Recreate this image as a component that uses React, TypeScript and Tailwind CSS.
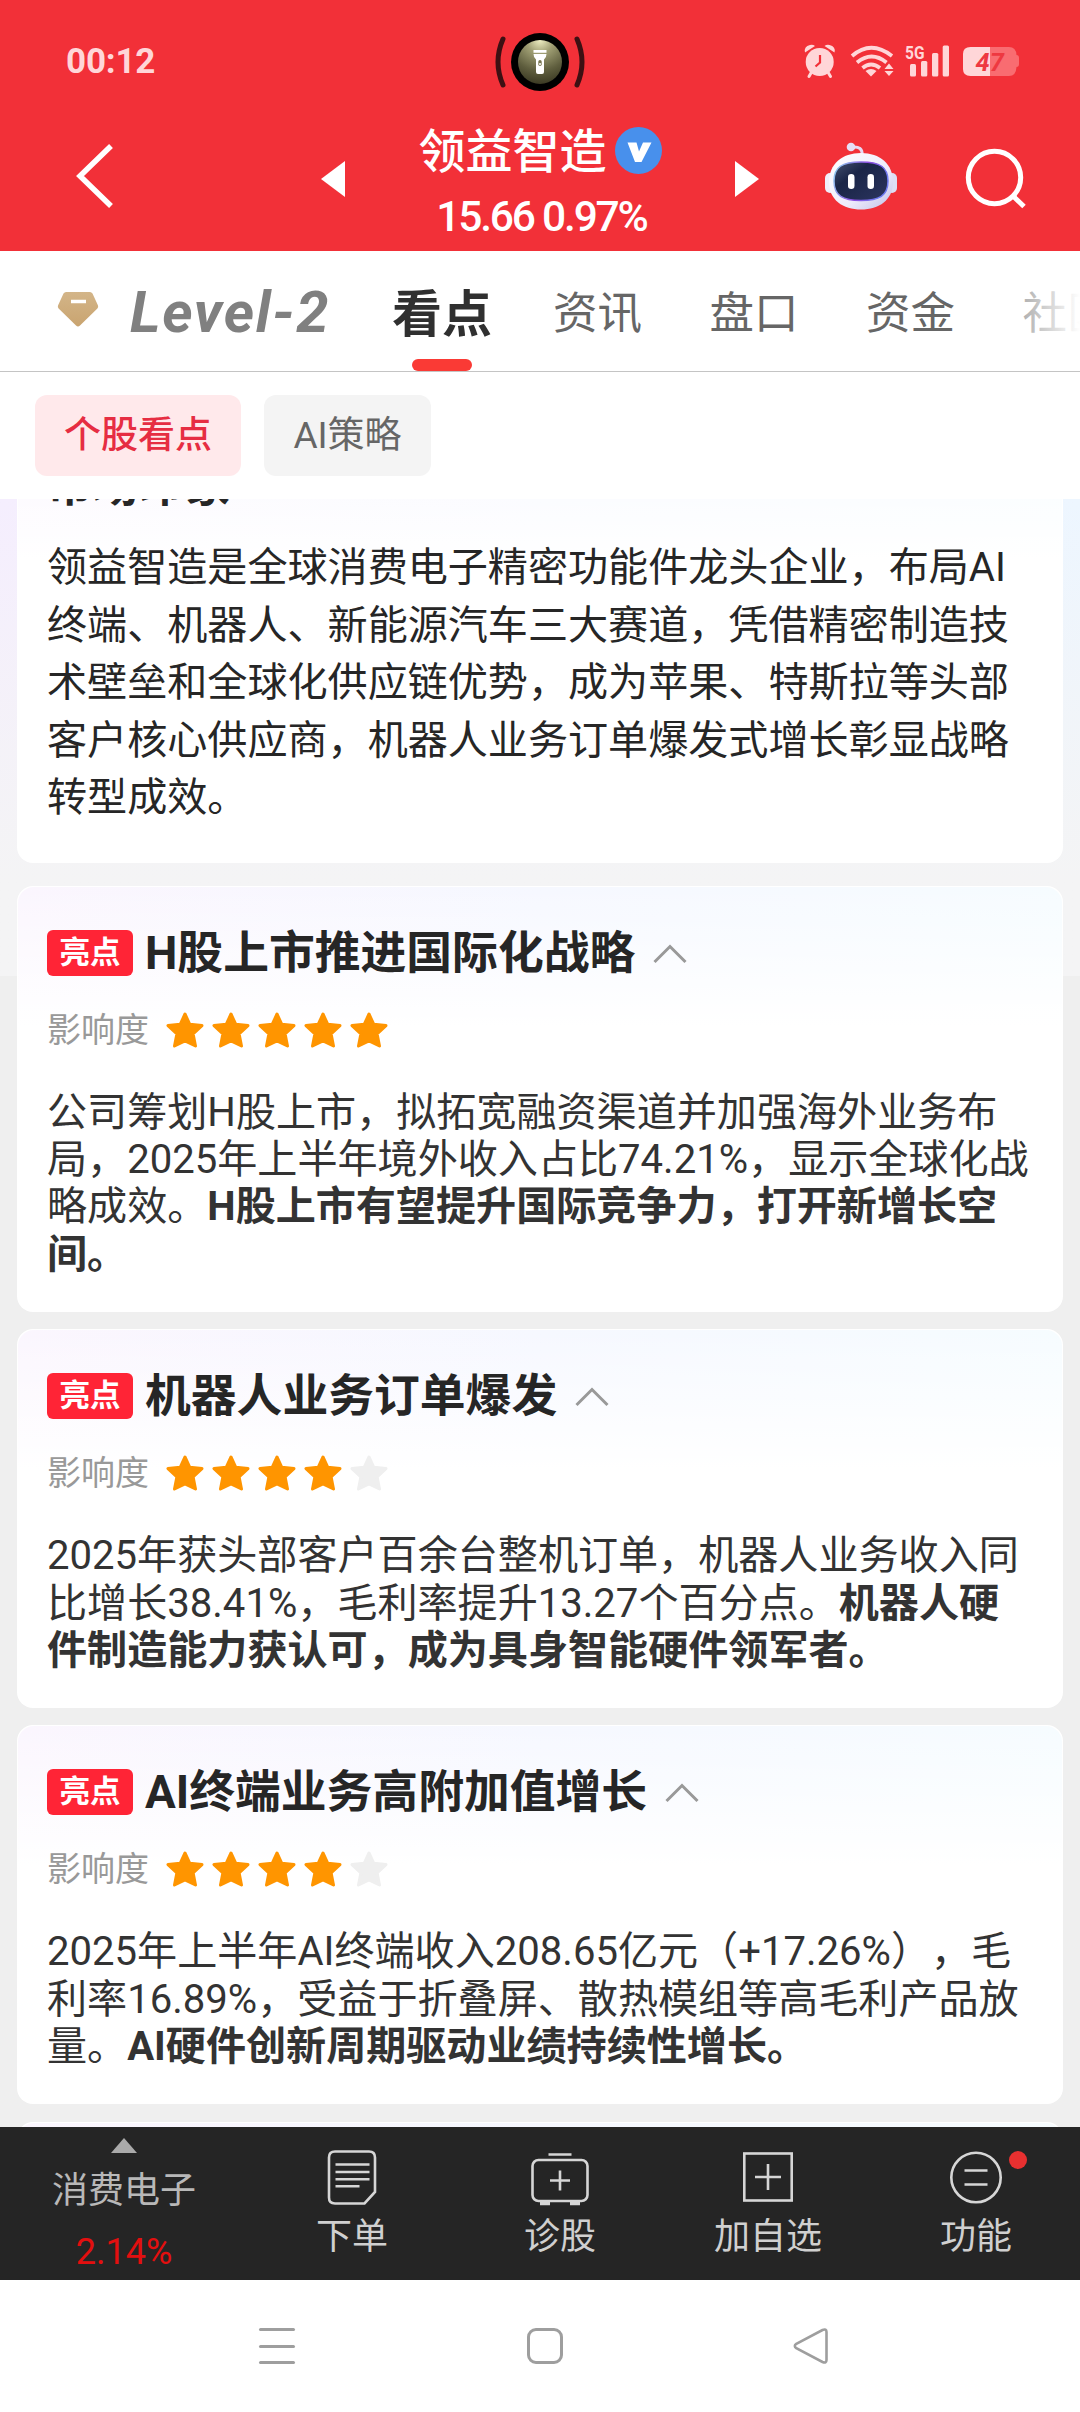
import { ReactNode } from "react";

const TABS = ["资讯", "盘口", "资金", "社区"];

interface IHighlight {
  title: string;
  stars: number;
  text: string;
  strong: string;
}

const HIGHLIGHTS: IHighlight[] = [
  {
    title: "H股上市推进国际化战略",
    stars: 5,
    text: "公司筹划H股上市，拟拓宽融资渠道并加强海外业务布局，2025年上半年境外收入占比74.21%，显示全球化战略成效。",
    strong: "H股上市有望提升国际竞争力，打开新增长空间。",
  },
  {
    title: "机器人业务订单爆发",
    stars: 4,
    text: "2025年获头部客户百余台整机订单，机器人业务收入同比增长38.41%，毛利率提升13.27个百分点。",
    strong: "机器人硬件制造能力获认可，成为具身智能硬件领军者。",
  },
  {
    title: "AI终端业务高附加值增长",
    stars: 4,
    text: "2025年上半年AI终端收入208.65亿元（+17.26%），毛利率16.89%，受益于折叠屏、散热模组等高毛利产品放量。",
    strong: "AI硬件创新周期驱动业绩持续性增长。",
  },
];

const Camera = () => (
  <svg className="absolute left-[490px] top-[30px]" width="100" height="64" viewBox="0 0 100 64">
    <defs>
      <radialGradient id="lens" cx="0.5" cy="0" r="1">
        <stop offset="0" stopColor="#f0f0c4" />
        <stop offset="0.3" stopColor="#a09f74" />
        <stop offset="0.7" stopColor="#5f5e3e" />
        <stop offset="1" stopColor="#3c3b24" />
      </radialGradient>
    </defs>
    <path d="M13 9q-10 23 0 46M87 9q10 23 0 46" fill="none" stroke="#3d1013" strokeWidth="5" strokeLinecap="round" />
    <circle cx="50" cy="32" r="29" fill="#000" />
    <circle cx="50" cy="32" r="22" fill="url(#lens)" />
    <path d="M43.500 20h13v2.800h-13zM43.500 24h13q0 3.500-2.500 5.500v12.500q0 2-2 2h-4q-2 0-2-2V29.500q-2.500-2-2.500-5.500z" fill="#fff" />
    <rect x="48.300" y="30" width="3.400" height="6" rx="1.700" fill="#77754f" />
    <circle cx="50" cy="34" r="1" fill="#fff" />
  </svg>
);

const StatusIcons = () => (
  <svg width="220" height="40" viewBox="802 42 220 40" fill="#ffd6d8">
    {/* alarm */}
    <circle cx="819.700" cy="63" r="14" />
    <path d="M805 53.500q-1.500-6 5-7.500 3-.6 5 1zM834.500 53.500q1.500-6-5-7.500-3-.6-5 1z" />
    <path d="M811 74l-2 3.500M828.500 74l2 3.500" stroke="#ffd6d8" strokeWidth="3" strokeLinecap="round" />
    <path d="M820 56v7.500l-4.500 4" fill="none" stroke="#f23038" strokeWidth="2.200" />
    {/* wifi */}
    <g fill="none" stroke="#ffd6d8" strokeWidth="3.800">
      <path d="M852 57q19-16.500 40 0" />
      <path d="M857 63.500q14.500-12 29.500 0" />
      <path d="M862.500 69q8.500-7 17.500 0" />
    </g>
    <path d="M865.500 72q5.500-4 11 0l-5.500 5.500z" />
    <path d="M889 64.500l4.500 5.500h-9zM889 77l4.500-5h-9z" />
    {/* signal */}
    <rect x="910" y="65" width="6" height="12.500" rx="1.500" />
    <rect x="921" y="62" width="6.300" height="15.500" rx="1.500" />
    <rect x="932" y="54" width="6.300" height="23.500" rx="1.500" />
    <rect x="942.700" y="46.500" width="6.300" height="31" rx="1.500" />
    <text x="905" y="59.500" fontSize="18.500" fontWeight="700" textLength="19.500" lengthAdjust="spacingAndGlyphs">5G</text>
    {/* battery */}
    <path d="M990 48h19q7 0 7.500 8 2.500 0 2.500 3v6q0 3-2.500 3-.5 9-7.500 9h-19z" fill="#f96c71" />
    <path d="M990 48h-19.500q-7.500 0-7.500 7v15q0 7 7.500 7H990z" />
    <text x="975.500" y="71.800" fontSize="25.500" fontWeight="700" fontStyle="italic" fill="#ee3840">47</text>
  </svg>
);

const Robot = () => (
  <svg width="74" height="70" viewBox="0 0 74 70">
    <defs>
      <linearGradient id="shell" x1="0" y1="0" x2="1" y2="1">
        <stop offset="0" stopColor="#fff" />
        <stop offset="0.6" stopColor="#efecfc" />
        <stop offset="1" stopColor="#bfc0e6" />
      </linearGradient>
      <linearGradient id="visor" x1="0" y1="0" x2="1" y2="1">
        <stop offset="0" stopColor="#45516f" />
        <stop offset="0.35" stopColor="#1a2547" />
        <stop offset="1" stopColor="#2c355f" />
      </linearGradient>
      <linearGradient id="rim" x1="0" y1="0" x2="1" y2="0.3">
        <stop offset="0" stopColor="#8fd8f0" />
        <stop offset="0.6" stopColor="#8c4be0" />
        <stop offset="1" stopColor="#6e7bf0" />
      </linearGradient>
    </defs>
    <path d="M28 5q11-1 10 8" fill="none" stroke="#e7d9f3" strokeWidth="3" />
    <circle cx="27" cy="5" r="4.300" fill="#e6def6" />
    <rect x="1" y="31" width="10" height="20" rx="5" fill="#f0eefb" />
    <rect x="63" y="31" width="10" height="20" rx="5" fill="#dddef4" />
    <path d="M37 11c19 0 32 11 32 29S55 67.500 37 67.500 5 58 5 40s13-29 32-29z" fill="url(#shell)" />
    <path d="M37 20c19 0 27 5 27 19 0 15-9 19.500-27 19.500S10 54 10 39c0-14 8-19 27-19z" fill="url(#visor)" stroke="url(#rim)" strokeWidth="1.500" />
    <rect x="24" y="32" width="6.500" height="15" rx="3.200" fill="#fff" />
    <rect x="43.500" y="32" width="6.500" height="15" rx="3.200" fill="#fff" />
  </svg>
);

const Header = () => (
  <header className="relative h-[251px] bg-[#f23038] text-white">
    <Camera />
    <div className="flex h-[122px] items-center justify-between pl-[66px] pr-[58px]">
      <span className="pt-[2px] text-[35px] font-bold tracking-[-0.200px] text-[#ffd6d8]">00:12</span>
      <StatusIcons />
    </div>
    <div className="flex h-[129px] pl-[74px]">
      <svg className="mt-[20px]" width="42" height="70" viewBox="0 0 42 70" fill="none" stroke="#fff" strokeWidth="5.500">
        <path d="M37 4L6 34l31 30" />
      </svg>
      <svg className="ml-[205px] mt-[39px]" width="24" height="36" viewBox="0 0 24 36" fill="#fff">
        <path d="M0 18L24 0v36z" />
      </svg>
      <div className="flex w-[390px] flex-col items-center">
        <div className="flex h-[56px] items-center gap-[8px]">
          <span className="mt-[4px] text-[47px] font-medium leading-[56px]">领益智造</span>
          <svg width="47" height="47" viewBox="0 0 47 47">
            <circle cx="23.500" cy="23.500" r="23.500" fill="#4890ec" />
            <path d="M12.500 15.500h9l2.500 9 4-9h8.500L26.500 35H20z" fill="#fff" />
          </svg>
        </div>
        <div className="mt-[14px] h-[50px] pl-[3px] text-[42.500px] font-medium leading-[50px] tracking-[-2.200px]">15.66 0.97%</div>
      </div>
      <svg className="mt-[39px]" width="24" height="36" viewBox="0 0 24 36" fill="#fff">
        <path d="M24 18L0 0v36z" />
      </svg>
      <div className="ml-[65px] mt-[20px]">
        <Robot />
      </div>
      <svg className="ml-[66px] mt-[25px]" width="64" height="64" viewBox="0 0 64 64" fill="none" stroke="#fff" strokeWidth="5">
        <circle cx="30.500" cy="30.500" r="26.200" />
        <path d="M49 49l11 10.500" />
      </svg>
    </div>
  </header>
);

const TabBar = () => (
  <nav className="relative flex h-[121px] items-center overflow-hidden border-b border-[#c4c4c4] bg-white pb-[1px]">
    <svg className="ml-[57px] mt-[-2px] shrink-0" width="42" height="37" viewBox="0 0 42 37">
      <defs>
        <linearGradient id="gem" x1="0" y1="0" x2="0" y2="1">
          <stop offset="0" stopColor="#d3b588" />
          <stop offset="1" stopColor="#c9a470" />
        </linearGradient>
      </defs>
      <path d="M9 1h24q1.500 0 2.500 1.500l5.500 12q.6 1.500-.6 3L23 34.500q-2 2-4 0L1.600 17.500q-1.200-1.500-.6-3l5.500-12Q7.500 1 9 1z" fill="url(#gem)" />
      <path d="M14 10.500h15" stroke="#fff" strokeWidth="3.500" />
    </svg>
    <span className="ml-[31px] mt-[2px] w-[203px] shrink-0 whitespace-nowrap text-[58px] font-bold italic leading-[60px] tracking-[1.700px] text-[#808080]">Level-2</span>
    <span className="relative ml-[58px] flex h-[120px] w-[102px] shrink-0 items-center justify-center pt-[9px] text-[50px] font-bold text-[#303030]">
      看点
      <i className="absolute bottom-0 left-[21px] h-[12px] w-[60px] rounded-full bg-[#fa3a35]"></i>
    </span>
    <div className="ml-[60px] flex gap-[67.500px] pt-[7px] text-[44.500px] text-[#666]">
      {TABS.map((tab) => (
        <span key={tab} className="whitespace-nowrap">{tab}</span>
      ))}
    </div>
    <div className="absolute right-0 top-0 h-[119px] w-[90px] bg-gradient-to-r from-white/20 to-white"></div>
  </nav>
);

const Card = ({ className, children }: { className: string; children?: ReactNode }) => (
  <section className={`relative overflow-hidden rounded-[16px] bg-white px-[30px] ${className}`}>
    <div className="absolute inset-x-px top-px h-[140px] rounded-t-[16px] bg-gradient-to-r from-[#fbf6fe] via-[#f6f8ff] to-[#f6fcff]">
      <div className="h-full bg-gradient-to-b from-white/0 to-white"></div>
    </div>
    <div className="relative">{children}</div>
  </section>
);

const Star = ({ active }: { active: boolean }) => (
  <svg width="38" height="38" viewBox="0 0 38 37" fill={active ? "#ff9500" : "#efefef"}>
    <path
      d="M19 2.500l4.700 10.200 12.300 1.400-8.900 8.200 2.400 12.200L19 29.300l-10.500 5.200 2.400-12.200L2 14.100l12.300-1.400z"
      stroke={active ? "#ff9500" : "#efefef"}
      strokeWidth="3"
      strokeLinejoin="round"
    />
  </svg>
);

const HighlightCard = ({ item }: { item: IHighlight }) => (
  <Card className="pb-[34px]">
    <div className="mt-[44px] flex h-[46px] items-center">
      <span className="flex h-[46px] w-[86px] items-center justify-center rounded-[6px] bg-[#ff2436] text-[30.500px] font-bold leading-none text-white">
        亮点
      </span>
      <h2 className="ml-[12px] whitespace-nowrap pt-px text-[45.800px] font-bold leading-[46px] text-[#262626]">{item.title}</h2>
      <svg className="ml-[18px] mt-px" width="34" height="20" viewBox="0 0 34 20" fill="none" stroke="#999" strokeWidth="3">
        <path d="M1.500 18L17 2.500 32.500 18" />
      </svg>
    </div>
    <div className="mt-[35px] flex h-[38px] items-center">
      <span className="text-[34px] leading-none text-[#999]">影响度</span>
      <div className="ml-[17px] flex gap-[8px]">
        {[0, 1, 2, 3, 4].map((i) => (
          <Star key={i} active={i < item.stars} />
        ))}
      </div>
    </div>
    <p className="mt-[40px] text-[40.100px] leading-[47.200px] text-[#333] [text-spacing-trim:space-all]">
      {item.text}
      <b>{item.strong}</b>
    </p>
  </Card>
);

const ToolItem = ({ label, children }: { label: string; children: ReactNode }) => (
  <div className="flex w-[208px] flex-col items-center pt-[20px]">
    <svg width="64" height="62" viewBox="0 0 64 62" fill="none" stroke="#d6d6d6" strokeWidth="2.600">
      {children}
    </svg>
    <span className="mt-[7px] text-[36px] leading-[42px] text-[#d0d0d0]">{label}</span>
  </div>
);

const Toolbar = () => (
  <div className="flex h-[153px] bg-[#252525]">
    <div className="flex w-[248px] flex-col items-center pt-[11px]">
      <svg width="26" height="15" viewBox="0 0 26 15" fill="#aaa">
        <path d="M13 0l13 15H0z" />
      </svg>
      <span className="mt-[17px] text-[36px] leading-[42px] text-[#b8b8b8]">消费电子</span>
      <span className="mt-[19px] text-[36px] leading-[42px] text-[#e30f0f]">2.14%</span>
    </div>
    <ToolItem label="下单">
      <path d="M15 4.500h34q6 0 6 6V45L44.500 56.500H15q-6 0-6-6v-40q0-6 6-6z" />
      <path d="M15.500 17.500h34M15.500 25h34M15.500 32.200h34M15.500 39.300h24" />
    </ToolItem>
    <ToolItem label="诊股">
      <rect x="4.500" y="13" width="55" height="41" rx="6" />
      <path d="M20.500 7.500h23M32 23.500v20M22 33.500h20" />
      <path d="M12 56.500h10M42 56.500h10" strokeWidth="3.500" />
    </ToolItem>
    <ToolItem label="加自选">
      <rect x="8.300" y="6.500" width="47.400" height="47" />
      <path d="M32 17v26M19 30h26" />
    </ToolItem>
    <ToolItem label="功能">
      <circle cx="32" cy="30.500" r="24.700" />
      <path d="M20.500 23.500h23M20.500 37.500h23" />
    </ToolItem>
  </div>
);

const SystemNav = () => (
  <div className="flex h-[132px] items-center bg-white pl-[259px]">
    <div className="flex h-[36px] w-[36px] flex-col justify-between">
      <i className="h-[3px] rounded-full bg-[#9e9e9e]"></i>
      <i className="h-[3px] rounded-full bg-[#9e9e9e]"></i>
      <i className="h-[3px] rounded-full bg-[#9e9e9e]"></i>
    </div>
    <div className="ml-[232px] h-[36px] w-[36px] rounded-[9px] border-[3px] border-[#9e9e9e]"></div>
    <svg className="ml-[230px]" width="36" height="36" viewBox="0 0 36 36" fill="none" stroke="#9e9e9e" strokeWidth="2.600">
      <path d="M3.300 15.800L29.500 2q4-1.500 4 2v28q0 3.500-4 2L3.300 20.200q-3-2.200 0-4.400z" />
    </svg>
  </div>
);

export default function App() {
  return (
    <div className="h-[2412px] w-[1080px] overflow-hidden bg-white font-['Roboto','Noto_Sans_CJK_SC',sans-serif]">
      <Header />
      <TabBar />
      <div className="flex h-[127px] gap-[23px] bg-white pl-[35px] pt-[23px] text-[37px]">
        <span className="flex h-[81px] w-[206px] items-center justify-center rounded-[12px] bg-[#ffe9eb] font-medium text-[#e62d42]">
          个股看点
        </span>
        <span className="flex h-[81px] w-[167px] items-center justify-center rounded-[12px] bg-[#f4f4f4] text-[#666]">
          AI策略
        </span>
      </div>
      <main className="relative h-[1628px] overflow-hidden bg-[#efefef] px-[17px]">
        <div className="absolute inset-x-0 top-0 h-[477px] bg-gradient-to-r from-[#f5eefe] to-[#edf6ff]">
          <div className="h-full bg-gradient-to-b from-[#f4f4f5]/0 via-[#f4f4f5] via-80% to-[#f4f4f5]"></div>
        </div>
        <Card className="mt-[-80px] h-[444px]">
          <h2 className="mt-[41px] text-[45.800px] font-bold leading-[54px] text-[#262626]">市场印象</h2>
          <p className="mt-[25px] text-[40.100px] leading-[57.500px] text-[#262626]">
            领益智造是全球消费电子精密功能件龙头企业，布局AI终端、机器人、新能源汽车三大赛道，凭借精密制造技术壁垒和全球化供应链优势，成为苹果、特斯拉等头部客户核心供应商，机器人业务订单爆发式增长彰显战略转型成效。
          </p>
        </Card>
        <div className="mt-[23px] flex flex-col gap-[17.500px]">
          {HIGHLIGHTS.map((item) => (
            <HighlightCard key={item.title} item={item} />
          ))}
          <Card className="h-[200px]" />
        </div>
      </main>
      <div className="relative">
        <Toolbar />
        <i className="absolute right-[53px] top-[24px] h-[18px] w-[18px] rounded-full bg-[#e83030]"></i>
      </div>
      <SystemNav />
    </div>
  );
}
